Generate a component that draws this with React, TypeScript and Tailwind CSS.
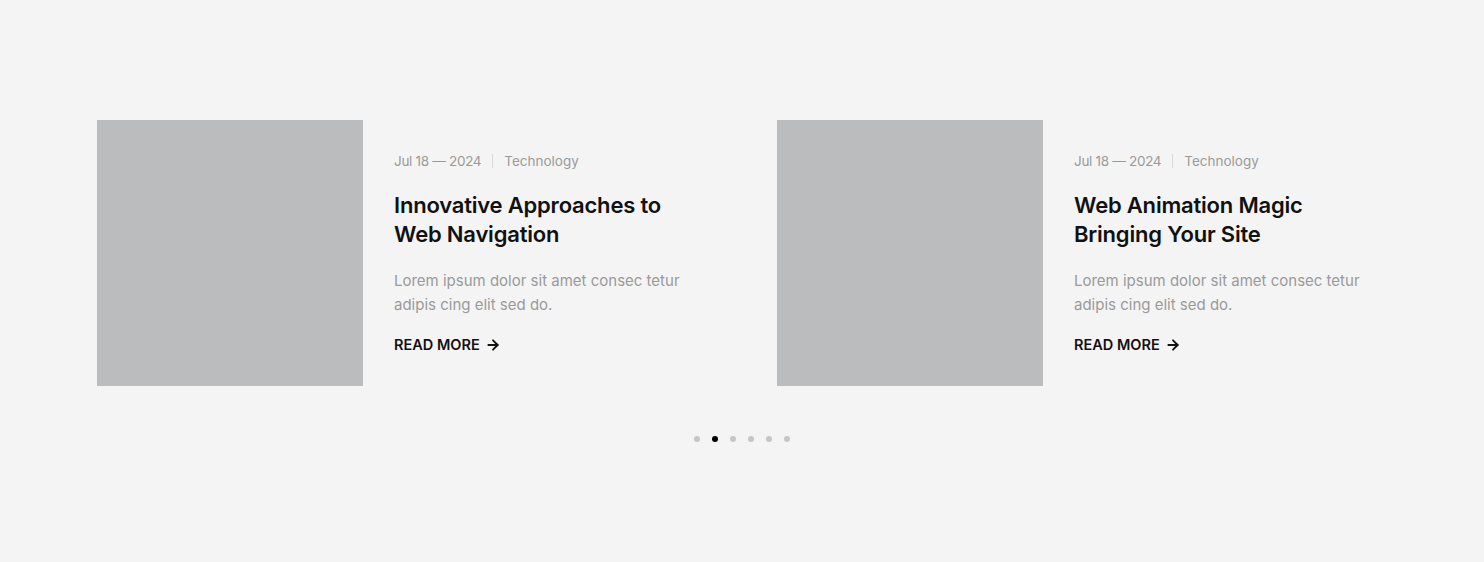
import { ArrowRight } from "lucide-react";

const posts = [
  {
    date: "Jul 18 — 2024",
    category: "Technology",
    title: ["Innovative Approaches to", "Web Navigation"],
    excerpt: "Lorem ipsum dolor sit amet consec tetur adipis cing elit sed do.",
  },
  {
    date: "Jul 18 — 2024",
    category: "Technology",
    title: ["Web Animation Magic", "Bringing Your Site"],
    excerpt: "Lorem ipsum dolor sit amet consec tetur adipis cing elit sed do.",
  },
];

function PostCard({ post }: { post: (typeof posts)[number] }) {
  return (
    <article className="flex w-[630px] shrink-0 gap-[31px]">
      <div className="h-[266px] w-[266px] shrink-0 bg-[#bbbcbe]" />
      <div className="w-[300px] pt-[30px]">
        <div className="flex items-center text-[13.5px] leading-[22px] text-[#9a9a9a]">
          <span className="tracking-[-0.3px]">{post.date}</span>
          <span className="mx-[11px] h-[14px] w-px bg-[#d9d9d9]" />
          <span>{post.category}</span>
        </div>
        <h3 className="mt-[19px] text-[22px] font-semibold leading-[29px] tracking-[-0.2px] text-[#111]">
          {post.title[0]}
          <br />
          {post.title[1]}
        </h3>
        <p className="mt-[20px] text-[15px] leading-[24px] text-[#9a9a9a]">{post.excerpt}</p>
        <a href="#" className="mt-[17px] inline-flex items-center gap-[5px] text-[14.5px] font-semibold text-[#111]">
          READ MORE
          <ArrowRight size={16} strokeWidth={2.75} />
        </a>
      </div>
    </article>
  );
}

export default function App() {
  return (
    <div
      className="flex h-[562px] w-full flex-col items-center bg-[#f4f4f4] pt-[120px]"
      style={{ fontFamily: "Inter, 'Noto Sans', sans-serif" }}
    >
      <div className="flex w-[1290px] gap-[50px]">
        {posts.map((p, i) => (
          <PostCard key={i} post={p} />
        ))}
      </div>
      <div className="mt-[50px] flex gap-[12px]">
        {[0, 1, 2, 3, 4, 5].map((i) => (
          <span key={i} className={`h-[6px] w-[6px] rounded-full ${i === 1 ? "bg-black" : "bg-[#c6c6c6]"}`} />
        ))}
      </div>
    </div>
  );
}
